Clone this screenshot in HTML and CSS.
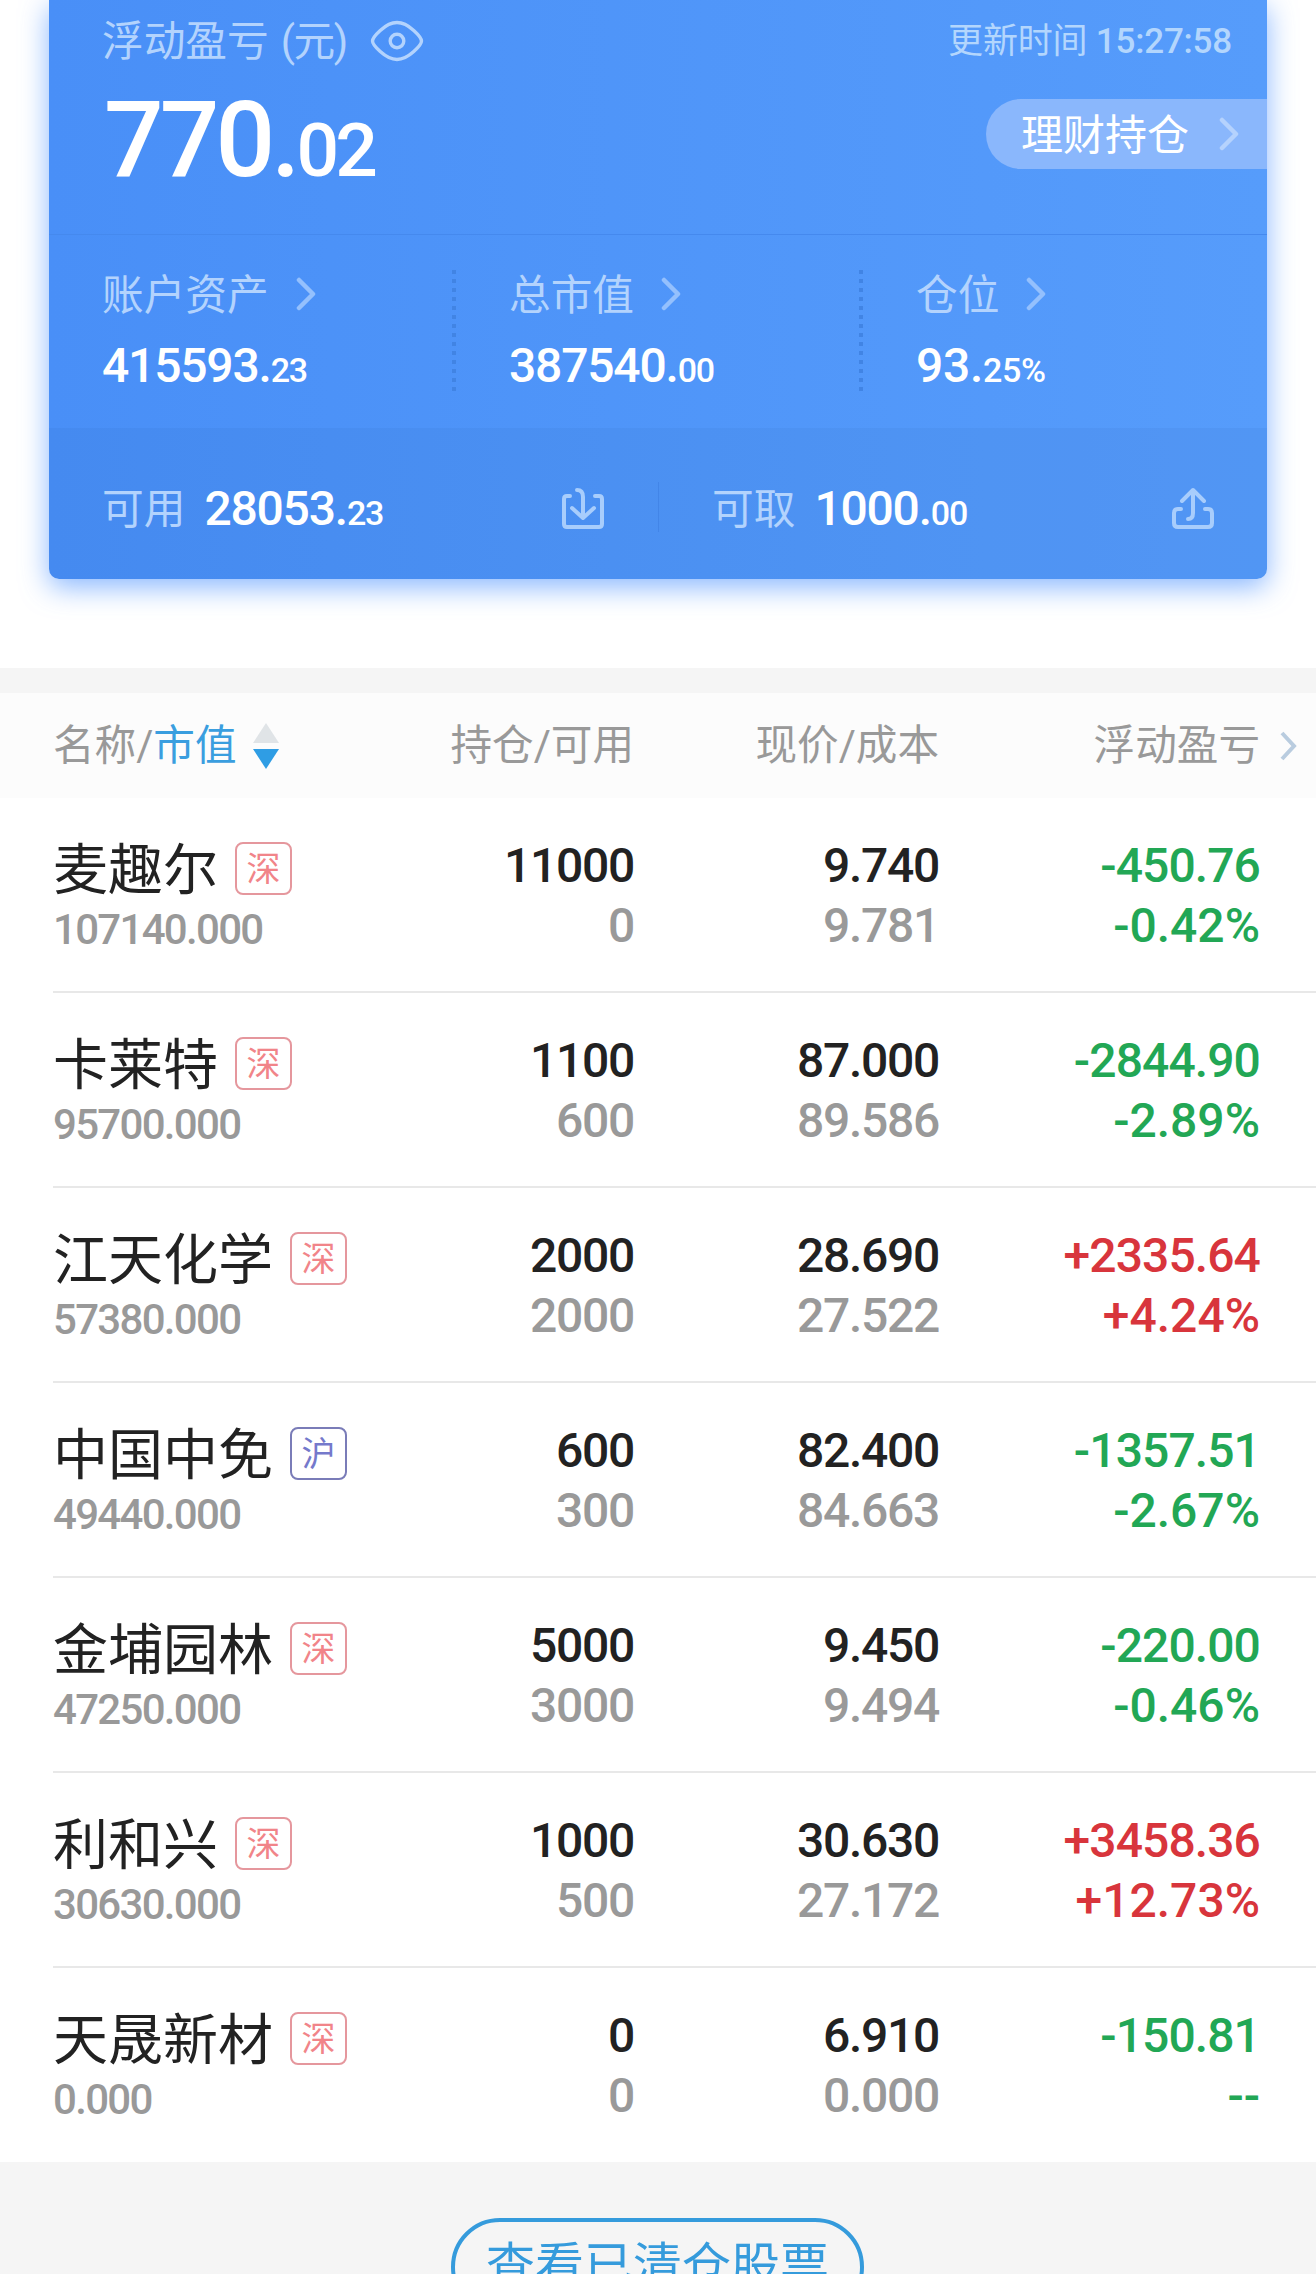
FILE: index.html
```html
<!DOCTYPE html>
<html lang="zh-CN">
<head>
  <meta charset="UTF-8" />
  <meta name="viewport" content="width=device-width, initial-scale=1.0"/>
  <title>持仓</title>
  <link rel="stylesheet" href="styles.css">
</head>
<body>
  <section class="summary">
    <div class="card">
      <div class="profit">
        <div class="profit-left">
          <div class="label profit-label">
            <span>浮动盈亏</span>
            <span class="unit">(元)</span>
            <svg class="eye" width="54" height="42" viewBox="0 0 54 42" fill="none" stroke="currentColor" stroke-width="3.4">
              <path d="M2.5 21C2.5 17.500 15 2.500 27 2.500S51.500 17.500 51.500 21 39 39.500 27 39.500 2.500 24.500 2.500 21Z"/>
              <circle cx="27" cy="21" r="6.800"/>
            </svg>
          </div>
          <div class="total">770.<small>02</small></div>
        </div>
        <div class="profit-right">
          <div class="time">更新时间 <span>15:27:58</span></div>
          <a class="pill"><span>理财持仓</span>
            <svg class="chevron" width="20" height="34" viewBox="0 0 20 34"><path d="M3 3l14 14L3 31"/></svg>
          </a>
        </div>
      </div>

      <div class="assets">
        <div class="asset">
          <div class="label">账户资产 <svg class="chevron" width="20" height="34" viewBox="0 0 20 34"><path d="M3 3l14 14L3 31"/></svg></div>
          <div class="value">415593.<small>23</small></div>
        </div>
        <div class="asset">
          <div class="label">总市值 <svg class="chevron" width="20" height="34" viewBox="0 0 20 34"><path d="M3 3l14 14L3 31"/></svg></div>
          <div class="value">387540.<small>00</small></div>
        </div>
        <div class="asset">
          <div class="label">仓位 <svg class="chevron" width="20" height="34" viewBox="0 0 20 34"><path d="M3 3l14 14L3 31"/></svg></div>
          <div class="value percent">93.<small>25%</small></div>
        </div>
      </div>

      <div class="cash">
        <div class="cash-item">
          <span class="label">可用</span>
          <span class="value">28053.<small>23</small></span>
          <svg class="cash-icon" width="44" height="44" viewBox="0 0 44 44">
            <path d="M9 9H6Q3 9 3 12V37Q3 40 6 40H38Q41 40 41 37V12Q41 9 38 9H34"/>
            <path d="M16 3Q22 3 22 10V31M11 21L22 31L33 21"/>
          </svg>
        </div>
        <div class="cash-item">
          <span class="label">可取</span>
          <span class="value">1000.<small>00</small></span>
          <svg class="cash-icon" width="44" height="44" viewBox="0 0 44 44">
            <path d="M10 22H7Q3 22 3 26V36Q3 40 7 40H37Q41 40 41 36V26Q41 22 37 22H34"/>
            <path d="M17 32Q22 32 22 26V3M11 14L22 3L33 14"/>
          </svg>
        </div>
      </div>
    </div>
  </section>

  <section class="holdings">
    <div class="head">
      <div class="sort">名称/<b>市值</b>
        <svg width="28" height="48" viewBox="0 0 28 48"><path d="M14 1L27 21H1Z" fill="#e0e4e7"/><path d="M14 47L27 27H1Z" fill="#2f9de4"/></svg>
      </div>
      <div>持仓/可用</div>
      <div>现价/成本</div>
      <div>浮动盈亏</div>
      <svg class="more" width="18" height="32" viewBox="0 0 18 32"><path d="M3 3l12 13L3 29"/></svg>
    </div>

    <div class="row">
      <div class="stock"><h3><span>麦趣尔</span><i class="tag">深</i></h3><p>107140.000</p></div>
      <div class="num">11000<p>0</p></div>
      <div class="num">9.740<p>9.781</p></div>
      <div class="num down">-450.76<p>-0.42%</p></div>
    </div>
    <div class="row">
      <div class="stock"><h3><span>卡莱特</span><i class="tag">深</i></h3><p>95700.000</p></div>
      <div class="num">1100<p>600</p></div>
      <div class="num">87.000<p>89.586</p></div>
      <div class="num down">-2844.90<p>-2.89%</p></div>
    </div>
    <div class="row">
      <div class="stock"><h3><span>江天化学</span><i class="tag">深</i></h3><p>57380.000</p></div>
      <div class="num">2000<p>2000</p></div>
      <div class="num">28.690<p>27.522</p></div>
      <div class="num up">+2335.64<p>+4.24%</p></div>
    </div>
    <div class="row">
      <div class="stock"><h3><span>中国中免</span><i class="tag sh">沪</i></h3><p>49440.000</p></div>
      <div class="num">600<p>300</p></div>
      <div class="num">82.400<p>84.663</p></div>
      <div class="num down">-1357.51<p>-2.67%</p></div>
    </div>
    <div class="row">
      <div class="stock"><h3><span>金埔园林</span><i class="tag">深</i></h3><p>47250.000</p></div>
      <div class="num">5000<p>3000</p></div>
      <div class="num">9.450<p>9.494</p></div>
      <div class="num down">-220.00<p>-0.46%</p></div>
    </div>
    <div class="row">
      <div class="stock"><h3><span>利和兴</span><i class="tag">深</i></h3><p>30630.000</p></div>
      <div class="num">1000<p>500</p></div>
      <div class="num">30.630<p>27.172</p></div>
      <div class="num up">+3458.36<p>+12.73%</p></div>
    </div>
    <div class="row">
      <div class="stock"><h3><span>天晟新材</span><i class="tag">深</i></h3><p>0.000</p></div>
      <div class="num">0<p>0</p></div>
      <div class="num">6.910<p>0.000</p></div>
      <div class="num down">-150.81<p>--</p></div>
    </div>
  </section>

  <footer>
    <a class="cleared">查看已清仓股票</a>
  </footer>
</body>
</html>
```
FILE: styles.css
```css
* {
  box-sizing: border-box;
  margin: 0;
  padding: 0;
}

body {
  width: 1316px;
  height: 2274px;
  overflow: hidden;
  background: #fff;
  font-family: Roboto, "Noto Sans CJK SC", sans-serif;
  font-size: 42px;
  color: #222;
}

svg {
  display: block;
  flex: none;
}

/* blue account card */
.summary {
  height: 668px;
  padding: 0 49px;
}

.card {
  height: 579px;
  border-radius: 0 0 10px 10px;
  background: linear-gradient(90deg, #498ff7, #569cfb);
  box-shadow: 0 8px 28px rgba(74, 144, 255, 0.65);
  color: #fff;
}

.label {
  display: flex;
  align-items: center;
  height: 50px;
  font-size: 41.7px;
  line-height: 52px;
  color: #b3d3fd;
}

.chevron {
  fill: none;
  stroke: #94c0fd;
  stroke-width: 4.5;
  stroke-linecap: round;
  stroke-linejoin: round;
}

.profit {
  display: flex;
  justify-content: space-between;
  height: 235px;
  padding: 16px 0 0 53px;
  border-bottom: 1px solid #4589ee;
}

.profit-label {
  padding-top: 2px;
}

.unit {
  margin-left: 12px;
  letter-spacing: -1.5px;
}

.eye {
  margin: 0 0 3px 23px;
}

.total {
  margin: 15px 0 0 2px;
  font-size: 105px;
  font-weight: 500;
  line-height: 120px;
  letter-spacing: -3.9px;
}

.total small {
  font-size: 75px;
  letter-spacing: -4px;
}

.profit-right {
  display: flex;
  flex-direction: column;
  align-items: flex-end;
}

.time {
  height: 50px;
  padding: 1px 35px 0 0;
  font-size: 35px;
  line-height: 50px;
  letter-spacing: -0.2px;
  color: #b3d6fd;
}

.time span {
  font-weight: 500;
}

.pill {
  display: flex;
  align-items: center;
  justify-content: space-between;
  width: 281px;
  height: 70px;
  margin-top: 33px;
  padding: 0 28px 0 35px;
  border-radius: 35px 0 0 35px;
  background: #8ab7fc;
  line-height: 70px;
}

.pill span {
  padding-top: 4px;
}

.pill .chevron {
  stroke: #b5d2fd;
}

.assets {
  display: grid;
  grid-template-columns: 407px 407px 1fr;
  height: 193px;
  padding-top: 35px;
}

.asset {
  height: 121px;
  padding-left: 53px;
  background: repeating-linear-gradient(#4184e4 0 4px, transparent 4px 9px) no-repeat 100% 0 / 4px 121px;
}

.asset:last-child {
  background: none;
}

.asset .label {
  padding-top: 2px;
}

.asset .chevron {
  margin: 0 0 4px 27px;
}

.value {
  font-size: 48px;
  font-weight: 500;
  line-height: 60px;
  letter-spacing: -1.2px;
}

.asset .value {
  margin-top: 16px;
}

.value small {
  font-size: 34px;
  letter-spacing: -1.2px;
}

.value.percent,
.percent small {
  letter-spacing: -0.3px;
}

.cash {
  display: grid;
  grid-template-columns: 1fr 1fr;
  height: 151px;
  padding-top: 54px;
  border-radius: 0 0 10px 10px;
  background: rgba(20, 60, 130, 0.06);
}

.cash-item {
  display: flex;
  align-items: center;
  height: 50px;
  padding: 0 53px;
}

.cash-item + .cash-item {
  padding-right: 52px;
  border-left: 1px solid #4285e8;
}

.cash .label {
  margin-top: 6px;
}

.cash .value {
  margin: 8px 0 0 19px;
}

.cash-icon {
  margin: 3px 0 0 auto;
  fill: none;
  stroke: #a8cdfc;
  stroke-width: 4;
  stroke-linecap: round;
  stroke-linejoin: round;
}

/* holdings table */
.holdings {
  border-top: 25px solid #f5f5f5;
}

.head,
.row {
  display: grid;
  grid-template-columns: 335px 246px 305px 321px 1fr;
  margin-left: 53px;
}

.head {
  align-items: center;
  height: 105px;
  margin-left: 0;
  padding-left: 53px;
  background: #fcfcfc;
  font-size: 41.6px;
  line-height: 60px;
  color: #999;
  text-align: right;
}

.sort {
  display: flex;
  align-items: center;
}

.sort b {
  font-weight: 400;
  color: #3a9edf;
}

.sort svg {
  margin-left: 15px;
}

.more {
  margin-left: 19px;
  fill: none;
  stroke: #b9ccdf;
  stroke-width: 4;
}

.row {
  height: 195px;
  padding-top: 38px;
  border-bottom: 2px solid #e8e8e8;
}

.row:last-child {
  height: 194px;
  border-bottom: none;
}

.stock h3 {
  display: flex;
  align-items: center;
  height: 64px;
  font-size: 55px;
  font-weight: 400;
  line-height: 64px;
  white-space: nowrap;
}

.stock h3 span {
  padding-top: 4px;
}

.stock p {
  font-size: 42px;
  font-weight: 500;
  line-height: 60px;
  letter-spacing: -1.7px;
  color: #999;
}

.tag {
  width: 57px;
  height: 53px;
  margin-left: 17px;
  border: 2px solid #e5979d;
  border-radius: 8px;
  font-size: 34px;
  font-style: normal;
  line-height: 50px;
  text-align: center;
  color: #f18489;
}

.tag.sh {
  border-color: #7a7cb8;
  color: #7579cb;
}

.num {
  font-size: 48px;
  font-weight: 500;
  line-height: 60px;
  letter-spacing: -1.3px;
  text-align: right;
}

.num p {
  color: #999;
}

.down,
.up {
  letter-spacing: -0.9px;
}

.down p,
.up p {
  letter-spacing: 0;
}

.down,
.down p {
  color: #22a755;
}

.up,
.up p {
  color: #d8353c;
}

footer {
  height: 112px;
  padding-top: 56px;
  background: #f5f5f5;
}

.cleared {
  display: block;
  width: 413px;
  height: 98px;
  margin-left: 451px;
  border: 4px solid #359bdc;
  border-radius: 49px;
  font-size: 49px;
  line-height: 90px;
  text-align: center;
  color: #359bdc;
}
```
